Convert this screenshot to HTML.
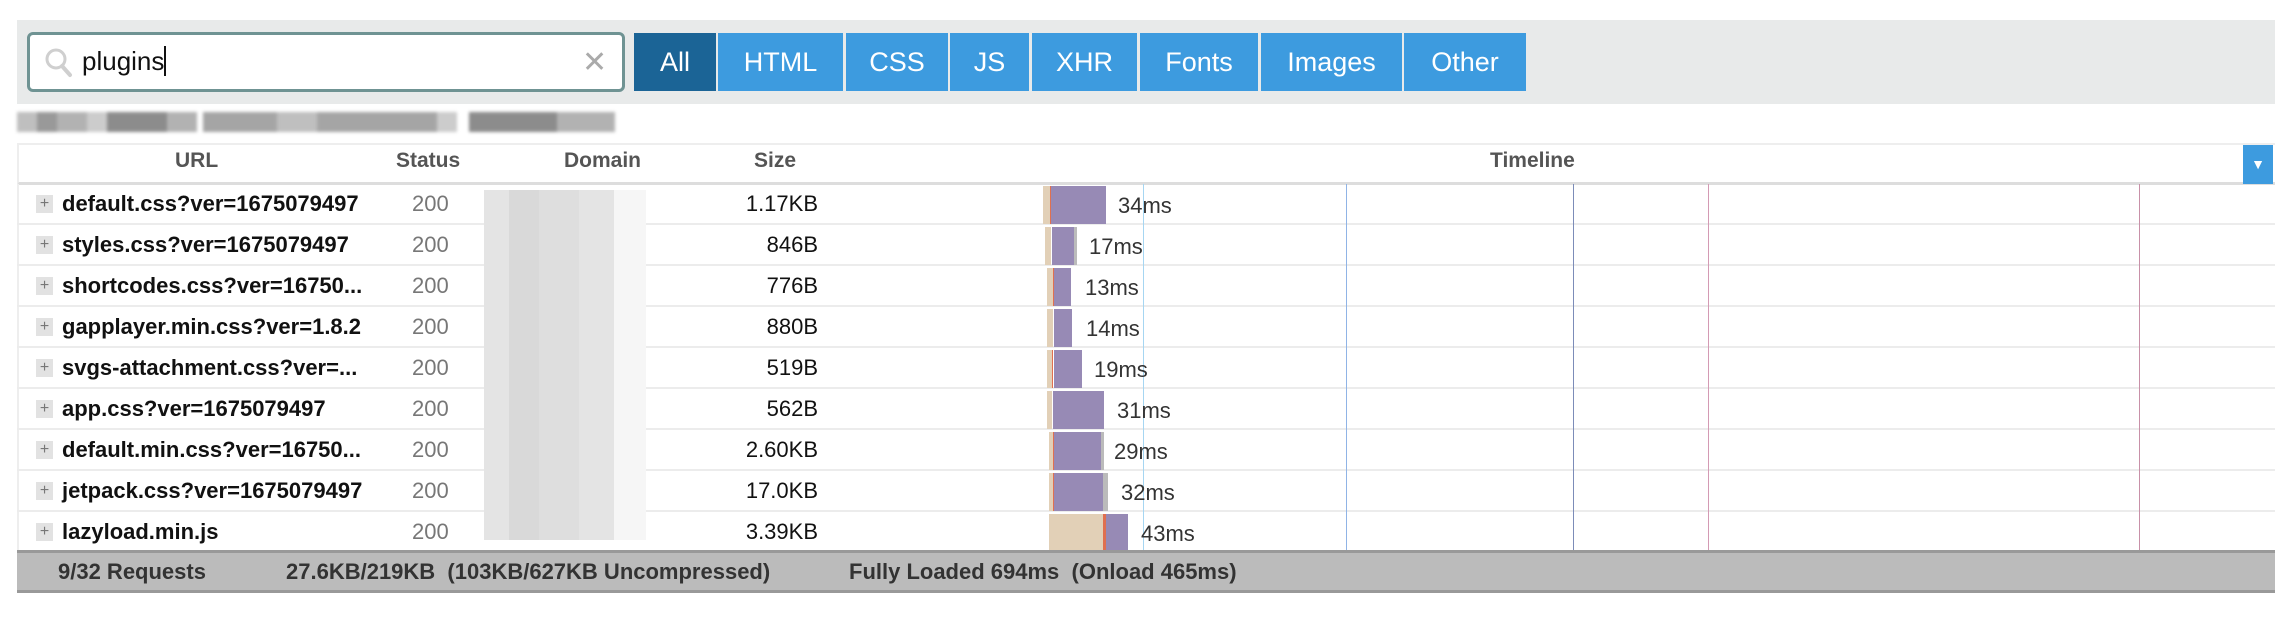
<!DOCTYPE html>
<html><head><meta charset="utf-8"><style>
*{margin:0;padding:0;box-sizing:border-box}
body{width:2292px;height:618px;background:#fff;position:relative;overflow:hidden;font-family:"Liberation Sans",Arial,sans-serif}
.a{position:absolute}
.bar{left:17px;top:20px;width:2258px;height:84px;background:#e8eaea}
.search{left:27px;top:32px;width:598px;height:60px;border:3px solid #6f9393;border-radius:6px;background:#fff}
.btn{position:absolute;top:33px;height:58px;background:#3d9bdf;color:#fff;font-size:27px;line-height:58px;text-align:center}
.hdr{font-size:21px;font-weight:bold;color:#555;top:149px}
.row{position:absolute;left:17px;width:2258px;height:41px;border-bottom:2px solid #ececec}
.plus{position:absolute;left:19px;top:11px;width:17px;height:18px;background:#e2e2e2;color:#777;font-size:16px;line-height:17px;text-align:center}
.url{position:absolute;left:45px;top:7px;font-size:22px;font-weight:bold;color:#111}
.st{position:absolute;left:395px;top:7px;font-size:22px;color:#777}
.sz{position:absolute;right:1457px;top:7px;font-size:22px;color:#111}
.b{position:absolute;top:1px;height:38px}
.ms{position:absolute;top:9px;font-size:22px;color:#333}
.vl{position:absolute;top:184px;height:368px;width:2px}
.ft{position:absolute;top:559px;font-size:22px;font-weight:bold;color:#333}
</style></head><body>
<div class="a bar"></div>
<div class="a search">
<svg class="a" style="left:14px;top:12px" width="30" height="32" viewBox="0 0 30 32"><circle cx="12" cy="12" r="9" fill="none" stroke="#cfcfcf" stroke-width="3"/><line x1="18" y1="19" x2="26" y2="28" stroke="#cfcfcf" stroke-width="4" stroke-linecap="round"/></svg>
<div class="a" style="left:52px;top:11px;font-size:26px;color:#111">plugins<span style="display:inline-block;width:2px;height:30px;background:#111;vertical-align:-6px"></span></div>
<div class="a" style="left:552px;top:10px;font-size:30px;color:#aaa">✕</div>
</div>
<div class="btn" style="left:634px;width:82px;background:#1b6496">All</div>
<div class="btn" style="left:718px;width:125px">HTML</div>
<div class="btn" style="left:846px;width:102px">CSS</div>
<div class="btn" style="left:950px;width:79px">JS</div>
<div class="btn" style="left:1032px;width:105px">XHR</div>
<div class="btn" style="left:1140px;width:118px">Fonts</div>
<div class="btn" style="left:1261px;width:141px">Images</div>
<div class="btn" style="left:1404px;width:122px">Other</div>
<div class="a" style="left:17px;top:112px;width:598px;height:20px;background:linear-gradient(90deg,#aaa 0 20px,#777 20px 40px,#999 40px 70px,#bbb 70px 90px,#666 90px 150px,#999 150px 180px,#fff 180px 186px,#888 186px 260px,#aaa 260px 300px,#888 300px 420px,#bbb 420px 440px,#fff 440px 452px,#666 452px 540px,#999 540px 598px);opacity:.75;filter:blur(1.5px)"></div>
<div class="a" style="left:17px;top:143px;width:2258px;height:42px;border-top:2px solid #eee;border-bottom:3px solid #ddd;border-left:2px solid #eee"></div>
<div class="a hdr" style="left:175px">URL</div>
<div class="a hdr" style="left:396px">Status</div>
<div class="a hdr" style="left:564px">Domain</div>
<div class="a hdr" style="left:754px">Size</div>
<div class="a hdr" style="left:1490px">Timeline</div>
<div class="a" style="left:2243px;top:145px;width:30px;height:39px;background:#3d9bdf;color:#fff;font-size:14px;text-align:center;line-height:39px">▼</div>
<div class="a" style="left:17px;top:184px;width:2px;height:368px;background:#eee"></div>

<div class="row" style="top:184px"><div class="plus">+</div><div class="url">default.css?ver=1675079497</div><div class="st">200</div><div class="sz">1.17KB</div></div>
<div class="row" style="top:225px"><div class="plus">+</div><div class="url">styles.css?ver=1675079497</div><div class="st">200</div><div class="sz">846B</div></div>
<div class="row" style="top:266px"><div class="plus">+</div><div class="url">shortcodes.css?ver=16750...</div><div class="st">200</div><div class="sz">776B</div></div>
<div class="row" style="top:307px"><div class="plus">+</div><div class="url">gapplayer.min.css?ver=1.8.2</div><div class="st">200</div><div class="sz">880B</div></div>
<div class="row" style="top:348px"><div class="plus">+</div><div class="url">svgs-attachment.css?ver=...</div><div class="st">200</div><div class="sz">519B</div></div>
<div class="row" style="top:389px"><div class="plus">+</div><div class="url">app.css?ver=1675079497</div><div class="st">200</div><div class="sz">562B</div></div>
<div class="row" style="top:430px"><div class="plus">+</div><div class="url">default.min.css?ver=16750...</div><div class="st">200</div><div class="sz">2.60KB</div></div>
<div class="row" style="top:471px"><div class="plus">+</div><div class="url">jetpack.css?ver=1675079497</div><div class="st">200</div><div class="sz">17.0KB</div></div>
<div class="row" style="top:512px;border-bottom:none"><div class="plus">+</div><div class="url">lazyload.min.js</div><div class="st">200</div><div class="sz">3.39KB</div></div>

<div class="a" style="left:484px;top:190px;width:162px;height:350px;background:linear-gradient(90deg,#e4e4e4 0 25px,#d9d9d9 25px 55px,#dedede 55px 95px,#e4e4e4 95px 130px,#f6f6f6 130px)"></div>

<div class="vl" style="left:1143px;width:1px;background:#a6d6f2"></div>
<div class="vl" style="left:1346px;width:1px;background:#90b4e6"></div>
<div class="vl" style="left:1573px;width:1px;background:#7c8cb8"></div>
<div class="vl" style="left:1708px;width:1px;background:#d49ab4"></div>
<div class="vl" style="left:2139px;width:1px;background:#c890a8"></div>

<div class="b" style="top:186px;left:1043px;width:7px;background:#e2d0b7"></div><div class="b" style="top:186px;left:1050px;width:1px;background:#e07050"></div><div class="b" style="top:186px;left:1051px;width:55px;background:#978ab5"></div><div class="ms" style="top:193px;left:1118px">34ms</div>
<div class="b" style="top:227px;left:1045px;width:6px;background:#e2d0b7"></div><div class="b" style="top:227px;left:1052px;width:22px;background:#978ab5"></div><div class="b" style="top:227px;left:1074px;width:3px;background:#bbb"></div><div class="ms" style="top:234px;left:1089px">17ms</div>
<div class="b" style="top:268px;left:1047px;width:6px;background:#e2d0b7"></div><div class="b" style="top:268px;left:1053px;width:1px;background:#e07050"></div><div class="b" style="top:268px;left:1054px;width:17px;background:#978ab5"></div><div class="ms" style="top:275px;left:1085px">13ms</div>
<div class="b" style="top:309px;left:1047px;width:6px;background:#e2d0b7"></div><div class="b" style="top:309px;left:1054px;width:18px;background:#978ab5"></div><div class="ms" style="top:316px;left:1086px">14ms</div>
<div class="b" style="top:350px;left:1047px;width:5px;background:#e2d0b7"></div><div class="b" style="top:350px;left:1052px;width:1px;background:#e07050"></div><div class="b" style="top:350px;left:1054px;width:28px;background:#978ab5"></div><div class="ms" style="top:357px;left:1094px">19ms</div>
<div class="b" style="top:391px;left:1047px;width:5px;background:#e2d0b7"></div><div class="b" style="top:391px;left:1053px;width:51px;background:#978ab5"></div><div class="ms" style="top:398px;left:1117px">31ms</div>
<div class="b" style="top:432px;left:1049px;width:4px;background:#e2d0b7"></div><div class="b" style="top:432px;left:1053px;width:1px;background:#e07050"></div><div class="b" style="top:432px;left:1054px;width:47px;background:#978ab5"></div><div class="b" style="top:432px;left:1101px;width:3px;background:#bbb"></div><div class="ms" style="top:439px;left:1114px">29ms</div>
<div class="b" style="top:473px;left:1049px;width:4px;background:#e2d0b7"></div><div class="b" style="top:473px;left:1053px;width:1px;background:#e07050"></div><div class="b" style="top:473px;left:1054px;width:49px;background:#978ab5"></div><div class="b" style="top:473px;left:1103px;width:5px;background:#bbb"></div><div class="ms" style="top:480px;left:1121px">32ms</div>
<div class="b" style="top:514px;left:1049px;width:54px;background:#e2d0b7"></div><div class="b" style="top:514px;left:1103px;width:3px;background:#e07050"></div><div class="b" style="top:514px;left:1106px;width:22px;background:#978ab5"></div><div class="ms" style="top:521px;left:1141px">43ms</div>

<div class="a" style="left:17px;top:550px;width:2258px;height:43px;background:#bbb;border-top:3px solid #999;border-bottom:3px solid #999"></div>
<div class="ft" style="left:58px">9/32 Requests</div>
<div class="ft" style="left:286px">27.6KB/219KB&nbsp; (103KB/627KB Uncompressed)</div>
<div class="ft" style="left:849px">Fully Loaded 694ms&nbsp; (Onload 465ms)</div>
</body></html>
